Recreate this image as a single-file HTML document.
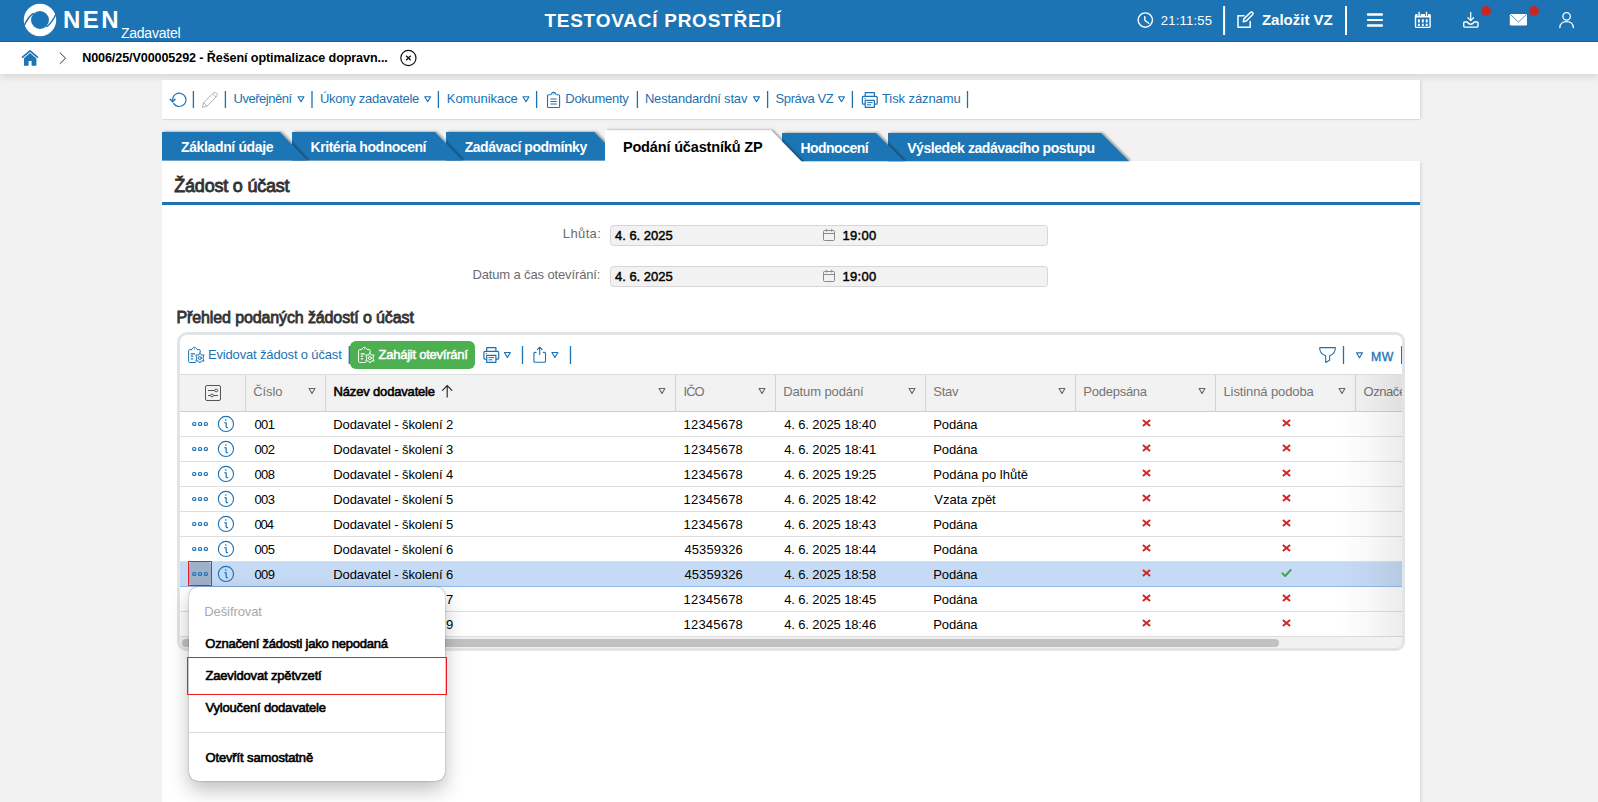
<!DOCTYPE html>
<html lang="cs"><head><meta charset="utf-8"><title>NEN - Podání účastníků ZP</title>
<style>
html,body{margin:0;padding:0}
body{width:1598px;height:802px;overflow:hidden;position:relative;background:#f2f2f2;font-family:"Liberation Sans", Arial, sans-serif;font-size:13px;color:#000}
.t{position:absolute;white-space:pre;line-height:20px;height:20px}
.a,.sep,.dot,.o{position:absolute;display:block}
#hdr{position:absolute;left:0;top:0;width:1598px;height:42px;box-sizing:border-box;border-bottom:1px solid #0c69ad;background:#1c74b4;z-index:2}
#crumbs{position:absolute;left:0;top:42px;width:1598px;height:32px;background:#fff;box-shadow:0 2px 8px rgba(0,0,0,.14)}
.dot{width:10px;height:10px;border-radius:50%;background:#c62828}
#toolbar{position:absolute;left:162px;top:80px;width:1258px;height:39px;background:#fff;box-shadow:2px 0 3px -1px rgba(0,0,0,.13),0 1px 1px rgba(0,0,0,.08)}
#panel{position:absolute;left:162px;top:160.5px;width:1258px;height:650px;background:#fff;box-shadow:2px 0 3px -1px rgba(0,0,0,.13);clip-path:inset(0 -8px 0 0)}
.inp{position:absolute;left:610px;width:438px;height:21px;box-sizing:border-box;border:1px solid #d6d6d6;border-radius:3.5px;background:#f2f2f2}
#grid{position:absolute;left:180px;top:335px;width:1222px;height:314px;background:#fff}
#gframe{position:absolute;left:177px;top:332px;width:1228px;height:319.4px;box-sizing:border-box;border:3px solid #e2e5e8;border-radius:9px;border-top-left-radius:10px}
#gbtn{position:absolute;left:350.3px;top:341.2px;width:125.2px;height:27.7px;border-radius:6px;background:#4caf50}
#ghead{position:absolute;left:180px;top:374px;width:1222px;height:38px;box-sizing:border-box;background:#f2f2f2;border-top:1px solid #dcdcdc;border-bottom:1px solid #cfcfcf}
.row{position:absolute;left:180px;width:1222px;height:25px;box-sizing:border-box;border-bottom:1px solid #dedede;background:#fff}
.row.sel{background:#c5daf5;border-bottom-color:#93baea;top:561.5px !important;height:25.5px}
.o{width:4.4px;height:4.2px;box-sizing:border-box;border:1.2px solid #1b72b3;border-radius:1.8px}
#fade{position:absolute;left:1338px;top:375px;width:64px;height:262px;background:linear-gradient(to right,rgba(0,0,0,0),rgba(0,0,0,.022) 45%,rgba(0,0,0,.075))}
#sbar{position:absolute;left:180px;top:637px;width:1222px;height:12px;background:#f1f1f1}
#sbar i{position:absolute;left:2px;top:2px;width:1097px;height:8px;border-radius:4px;background:#c1c1c1}
#menu{position:absolute;left:188.5px;top:587px;width:256.8px;height:194px;background:#fff;border-radius:9px;box-shadow:0 0 1.5px rgba(0,0,0,.5),0 9px 20px rgba(0,0,0,.25)}
</style></head>
<body>

<header id="hdr">
<svg class="a" style="left:22px;top:2px" width="36" height="36" viewBox="-18 -18 36 36">
 <circle r="12.6" fill="none" stroke="#fff" stroke-width="7.2"/>
 <path d="M-16.4 6.5C-14.15 2.05-10.46-5.24-6.2-6.7" fill="none" stroke="#1c74b4" stroke-width="1.5"/>
 <path d="M16.4-6.5C14.15-2.05 10.46 5.24 6.2 6.7" fill="none" stroke="#1c74b4" stroke-width="1.5"/>
</svg>
<span class="t" style="left:63.00px;top:9.80px;font-size:24px;font-weight:700;color:#fff;letter-spacing:2.500px;">NEN</span>
<span class="t" style="left:120.90px;top:23.30px;font-size:14px;color:#fff;letter-spacing:-0.225px;">Zadavatel</span>
<span class="t" style="left:544.40px;top:10.80px;font-size:19px;font-weight:700;color:#fff;letter-spacing:0.756px;">TESTOVACÍ PROSTŘEDÍ</span>
<svg class="a" style="left:1136px;top:10px" width="19" height="20" viewBox="1136 10 19 20" fill="none" stroke="#fff" stroke-width="1.4" stroke-linecap="round" stroke-linejoin="round"><circle cx="1145.3" cy="20.05" r="7.15"/><path d="M1144.8 16.6V20.2L1148.7 23.2"/></svg>
<span class="t" style="left:1160.80px;top:10.80px;font-size:13px;color:#fff;letter-spacing:0.214px;">21:11:55</span>
<i class="sep" style="left:1223px;top:6px;height:29px;width:3px;background:linear-gradient(90deg,rgba(255,255,255,0.90) 0px 1px,rgba(255,255,255,1.00) 1px 2px,rgba(255,255,255,0.10) 2px 3px)"></i>
<svg class="a" style="left:1235px;top:10px" width="21" height="20" viewBox="1235 10 21 20" fill="none" stroke="#fff" stroke-width="1.5" stroke-linejoin="round" stroke-linecap="round"><path d="M1244 15.8H1238V27.2H1250.2V21.5"/><path d="M1243.3 21.7L1243.9 18.9L1250.6 12.4Q1251.6 11.6 1252.6 12.5Q1253.6 13.5 1252.7 14.5L1246.1 21.1Z"/></svg>
<span class="t" style="left:1261.90px;top:9.80px;font-size:15px;font-weight:700;color:#fff;">Založit VZ</span>
<i class="sep" style="left:1345px;top:6px;height:29px;width:2px;background:linear-gradient(90deg,rgba(255,255,255,1.00) 0px 1px,rgba(255,255,255,1.00) 1px 2px)"></i>
<svg class="a" style="left:1366px;top:12px" width="18" height="17" viewBox="1366 12 18 17" fill="#fff"><rect x="1366.9" y="13.3" width="16.1" height="2.5" rx="1"/><rect x="1366.9" y="18.9" width="16.1" height="2.2" rx="1"/><rect x="1366.9" y="24.3" width="16.1" height="2.5" rx="1"/></svg>
<svg class="a" style="left:1413px;top:11px" width="20" height="19" viewBox="1413 11 20 19"><rect x="1415.5" y="14.9" width="14.6" height="12.5" rx="1" fill="none" stroke="#fff" stroke-width="1.4"/><rect x="1415" y="14.3" width="15.6" height="3.2" rx="0.8" fill="#fff"/><path d="M1419.1 12.1V16M1426.5 12.1V16" stroke="#1c74b4" stroke-width="3"/><path d="M1419.1 12.3V16.4M1426.5 12.3V16.4" stroke="#fff" stroke-width="1.4" stroke-linecap="round"/><path d="M1418.9 19.2V26.1M1422.8 19.2V26.1M1426.7 19.2V26.1" stroke="#fff" stroke-width="1.9" stroke-dasharray="3.2 1.3"/></svg>
<svg class="a" style="left:1461px;top:11px" width="20" height="19" viewBox="1461 11 20 19" fill="none" stroke="#fff" stroke-linecap="round" stroke-linejoin="round"><path d="M1470.7 12.4V20.4M1467.9 17.7L1470.7 20.6L1473.5 17.7" stroke-width="1.25"/><path d="M1467.2 22H1464.7Q1463.7 22 1463.7 23V26.1Q1463.7 27.1 1464.7 27.1H1477Q1478 27.1 1478 26.1V23Q1478 22 1477 22H1474.2Q1472.6 24.3 1470.7 24.3Q1468.8 24.3 1467.2 22Z" stroke-width="1.4"/></svg>
<i class="dot" style="left:1481px;top:6.2px"></i>
<svg class="a" style="left:1508px;top:13px" width="21" height="14" viewBox="1508 13 21 14"><rect x="1509.8" y="14" width="17.2" height="11.6" rx="1.3" fill="#fff"/><path d="M1510.4 14.6L1518.4 22L1526.4 14.6" fill="none" stroke="#1c74b4" stroke-width="0.75"/></svg>
<i class="dot" style="left:1529px;top:6.2px"></i>
<svg class="a" style="left:1557px;top:11px" width="20" height="19" viewBox="1557 11 20 19" fill="none" stroke="#fff" stroke-width="1.3" stroke-linecap="round"><circle cx="1566.6" cy="16.4" r="3.7"/><path d="M1559.8 27.6Q1560.2 21.6 1566.6 21.6Q1573 21.6 1573.4 27.6"/></svg>
</header>

<nav id="crumbs"></nav>
<svg class="a" style="left:21px;top:49px" width="18" height="18" viewBox="21 49 18 18"><path d="M22.6 57.2L30 50.9L37.4 57.2" fill="none" stroke="#1c74b4" stroke-width="1.7" stroke-linecap="round" stroke-linejoin="round"/><path d="M24 58.2L30 53.1L36.4 58.5V65.8H31.6V61H28.6V65.8H24Z" fill="#1c74b4"/></svg>
<svg class="a" style="left:58px;top:51px" width="10" height="14" viewBox="58 51 10 14"><path d="M59.8 52.6L65.6 58.2L59.8 63.8" fill="none" stroke="#333" stroke-width="1"/></svg>
<span class="t" style="left:82.20px;top:48.30px;font-size:12.6px;font-weight:700;letter-spacing:-0.106px;">N006/25/V00005292 - Řešení optimalizace dopravn...</span>
<svg class="a" style="left:399px;top:48px" width="19" height="20" viewBox="399 48 19 20" fill="none" stroke="#111" stroke-width="1.2"><circle cx="408.4" cy="58" r="7.6"/><path d="M406.1 55.7L410.7 60.3M410.7 55.7L406.1 60.3" stroke-width="1.3"/></svg>

<div id="toolbar"></div>
<svg class="a" style="left:169px;top:90px" width="20" height="20" viewBox="169 90 20 20" fill="none" stroke="#1b72b3" stroke-width="1.1" stroke-linecap="round" stroke-linejoin="round"><path d="M172.6 100.4A6.7 6.7 0 1 1 173.6 103.4"/><path d="M170.2 99.3L172.6 101.9L175 99.3" stroke-width="1.4"/></svg>
<i class="sep" style="left:192px;top:91px;height:17px;width:3px;background:linear-gradient(90deg,rgba(27,114,179,0.25) 0px 1px,rgba(27,114,179,1.00) 1px 2px,rgba(27,114,179,0.05) 2px 3px)"></i>
<svg class="a" style="left:200px;top:90px" width="20" height="20" viewBox="200 90 20 20" fill="none" stroke="#b9b1aa" stroke-width="1" stroke-linejoin="round"><path d="M202.4 107.4L203.6 102.6L213.6 92.8Q215 91.8 216.6 93.2Q218 94.8 216.9 96.2L207 106.2Z"/><path d="M203.6 102.6L207 106.2M212.6 93.8L216 97.2"/></svg>
<i class="sep" style="left:224px;top:91px;height:17px;width:3px;background:linear-gradient(90deg,rgba(27,114,179,0.25) 0px 1px,rgba(27,114,179,1.00) 1px 2px,rgba(27,114,179,0.05) 2px 3px)"></i>
<span class="t" style="left:233.50px;top:88.80px;font-size:13px;color:#1b72b3;letter-spacing:-0.467px;">Uveřejnění</span><svg class="a" style="left:296px;top:95px" width="10" height="8" viewBox="296 95 10 8" ><path d="M298.05 96.70H303.95L301.00 101.70Z" fill="none" stroke="#1b72b3" stroke-width="1.15" stroke-linejoin="round"/></svg>
<i class="sep" style="left:311px;top:91px;height:17px;width:2px;background:linear-gradient(90deg,rgba(27,114,179,0.65) 0px 1px,rgba(27,114,179,0.65) 1px 2px)"></i>
<span class="t" style="left:320.00px;top:88.80px;font-size:13px;color:#1b72b3;letter-spacing:-0.267px;">Úkony zadavatele</span><svg class="a" style="left:423px;top:95px" width="9" height="8" viewBox="423 95 9 8" ><path d="M424.75 96.70H430.65L427.70 101.70Z" fill="none" stroke="#1b72b3" stroke-width="1.15" stroke-linejoin="round"/></svg>
<i class="sep" style="left:437px;top:91px;height:17px;width:3px;background:linear-gradient(90deg,rgba(27,114,179,0.25) 0px 1px,rgba(27,114,179,1.00) 1px 2px,rgba(27,114,179,0.05) 2px 3px)"></i>
<span class="t" style="left:446.80px;top:88.80px;font-size:13px;color:#1b72b3;letter-spacing:-0.056px;">Komunikace</span><svg class="a" style="left:521px;top:95px" width="10" height="8" viewBox="521 95 10 8" ><path d="M523.05 96.70H528.95L526.00 101.70Z" fill="none" stroke="#1b72b3" stroke-width="1.15" stroke-linejoin="round"/></svg>
<i class="sep" style="left:535px;top:91px;height:17px;width:3px;background:linear-gradient(90deg,rgba(27,114,179,0.05) 0px 1px,rgba(27,114,179,1.00) 1px 2px,rgba(27,114,179,0.25) 2px 3px)"></i>
<svg class="a" style="left:545px;top:90px" width="17" height="20" viewBox="545 90 17 20" fill="none" stroke="#1b72b3" stroke-width="1.1" stroke-linejoin="round"><path d="M550.4 94.7H548.6Q547.5 94.7 547.5 95.8V106.4Q547.5 107.5 548.6 107.5H558.5Q559.6 107.5 559.6 106.4V95.8Q559.6 94.7 558.5 94.7H556.7"/><path d="M550.4 94.7Q551.5 94.4 551.7 93.4Q552.3 92.4 553.55 92.4Q554.8 92.4 555.4 93.4Q555.6 94.4 556.7 94.7"/><circle cx="553.55" cy="94" r="0.55" fill="#1b72b3" stroke="none"/><path d="M550.4 99H556.8M550.4 101.5H556.8M550.4 104H556.8" stroke-width="1.2"/></svg>
<span class="t" style="left:565.30px;top:88.80px;font-size:13px;color:#1b72b3;letter-spacing:-0.287px;">Dokumenty</span>
<i class="sep" style="left:636px;top:91px;height:17px;width:3px;background:linear-gradient(90deg,rgba(27,114,179,0.25) 0px 1px,rgba(27,114,179,1.00) 1px 2px,rgba(27,114,179,0.05) 2px 3px)"></i>
<span class="t" style="left:644.90px;top:88.80px;font-size:13px;color:#1b72b3;letter-spacing:-0.188px;">Nestandardní stav</span><svg class="a" style="left:752px;top:95px" width="9" height="8" viewBox="752 95 9 8" ><path d="M753.55 96.70H759.45L756.50 101.70Z" fill="none" stroke="#1b72b3" stroke-width="1.15" stroke-linejoin="round"/></svg>
<i class="sep" style="left:766px;top:91px;height:17px;width:3px;background:linear-gradient(90deg,rgba(27,114,179,0.05) 0px 1px,rgba(27,114,179,1.00) 1px 2px,rgba(27,114,179,0.25) 2px 3px)"></i>
<span class="t" style="left:775.60px;top:88.80px;font-size:13px;color:#1b72b3;letter-spacing:-0.413px;">Správa VZ</span><svg class="a" style="left:837px;top:95px" width="9" height="8" viewBox="837 95 9 8" ><path d="M838.55 96.70H844.45L841.50 101.70Z" fill="none" stroke="#1b72b3" stroke-width="1.15" stroke-linejoin="round"/></svg>
<i class="sep" style="left:851px;top:91px;height:17px;width:3px;background:linear-gradient(90deg,rgba(27,114,179,0.25) 0px 1px,rgba(27,114,179,1.00) 1px 2px,rgba(27,114,179,0.05) 2px 3px)"></i>
<svg class="a" style="left:860px;top:90px" width="20" height="20" viewBox="860 90 20 20" fill="none" stroke="#1b72b3" stroke-width="1.2" stroke-linejoin="round"><path d="M865.2 96.4V92.6H874.4V96.4"/><path d="M865.2 104.2H863.4Q862.4 104.2 862.4 103.2V97.4Q862.4 96.4 863.4 96.4H876.2Q877.2 96.4 877.2 97.4V103.2Q877.2 104.2 876.2 104.2H874.4"/><path d="M865.2 100.4H874.4V107.3H865.2Z"/><path d="M867 102.6H872.6M867 104.8H871" stroke-width="1"/><path d="M864.4 98.6H865.6" stroke-width="1"/></svg>
<span class="t" style="left:882.00px;top:88.80px;font-size:13px;color:#1b72b3;letter-spacing:-0.091px;">Tisk záznamu</span>
<i class="sep" style="left:966px;top:91px;height:17px;width:3px;background:linear-gradient(90deg,rgba(27,114,179,0.15) 0px 1px,rgba(27,114,179,1.00) 1px 2px,rgba(27,114,179,0.15) 2px 3px)"></i>

<section id="panel"></section>
<span class="t" style="left:174.30px;top:176.30px;font-size:18px;color:#333;letter-spacing:-0.215px;-webkit-text-stroke:0.85px #333;">Žádost o účast</span>
<i class="sep" style="left:162px;top:202px;width:1258px;height:3px;background:#1c74b4"></i>
<span class="t" style="left:562.80px;top:223.80px;font-size:13px;color:#6b6b6b;letter-spacing:0.380px;">Lhůta:</span>
<span class="t" style="left:472.40px;top:264.80px;font-size:13px;color:#6b6b6b;letter-spacing:-0.129px;">Datum a čas otevírání:</span>
<div class="inp" style="top:225px"></div>
<div class="inp" style="top:266px"></div>
<span class="t" style="left:614.90px;top:225.80px;font-size:13px;letter-spacing:0.011px;-webkit-text-stroke:0.45px #000;">4. 6. 2025</span><svg class="a" style="left:822px;top:228px" width="14" height="14" viewBox="0 0 14 14" fill="none" stroke="#8a8a8a" stroke-width="1"><rect x="1.5" y="2.5" width="11" height="10" rx="1"/><path d="M1.5 5.5H12.5M4.3 0.8V3.6M9.7 0.8V3.6"/></svg><span class="t" style="left:842.60px;top:225.80px;font-size:13px;letter-spacing:0.275px;-webkit-text-stroke:0.45px #000;">19:00</span>
<span class="t" style="left:614.90px;top:266.80px;font-size:13px;letter-spacing:0.011px;-webkit-text-stroke:0.45px #000;">4. 6. 2025</span><svg class="a" style="left:822px;top:269px" width="14" height="14" viewBox="0 0 14 14" fill="none" stroke="#8a8a8a" stroke-width="1"><rect x="1.5" y="2.5" width="11" height="10" rx="1"/><path d="M1.5 5.5H12.5M4.3 0.8V3.6M9.7 0.8V3.6"/></svg><span class="t" style="left:842.60px;top:266.80px;font-size:13px;letter-spacing:0.275px;-webkit-text-stroke:0.45px #000;">19:00</span>
<span class="t" style="left:176.50px;top:307.80px;font-size:16px;color:#333;letter-spacing:-0.119px;-webkit-text-stroke:0.8px #333;">Přehled podaných žádostí o účast</span>

<svg class="a" style="left:150px;top:120px" width="1000" height="45" viewBox="150 120 1000 45">
<defs><filter id="ts" x="-5%" y="-30%" width="110%" height="160%"><feDropShadow dx="2" dy="-0.4" stdDeviation="1.25" flood-color="#000" flood-opacity=".36"/></filter><filter id="ts2" x="-5%" y="-30%" width="110%" height="160%"><feDropShadow dx="1" dy="-0.5" stdDeviation="1.2" flood-color="#000" flood-opacity=".12"/></filter><clipPath id="cA"><rect x="150" y="120" width="1000" height="40.7"/></clipPath><clipPath id="cC"><rect x="150" y="120" width="1000" height="42"/></clipPath><clipPath id="cB"><rect x="150" y="120" width="1000" height="41.6"/></clipPath></defs>
<g clip-path="url(#cB)"><polygon points="888,133 1101,133 1129.5,161.6 888,161.6" fill="#1c74b4" filter="url(#ts)"/></g>
<g clip-path="url(#cB)"><polygon points="782,133 876,133 904.5,161.6 782,161.6" fill="#1c74b4" filter="url(#ts)"/></g>
<g clip-path="url(#cA)"><polygon points="446,132 594.3,132 622,160.7 446,160.7" fill="#1c74b4" filter="url(#ts)"/></g>
<g clip-path="url(#cA)"><polygon points="292,132 435,132 462.6,160.7 292,160.7" fill="#1c74b4" filter="url(#ts)"/></g>
<g clip-path="url(#cA)"><polygon points="162,132 280,132 307.4,160.7 162,160.7" fill="#1c74b4" filter="url(#ts)"/></g>
<g clip-path="url(#cC)"><polygon points="605,130.2 771,130.2 802.5,162.5 605,162.5" fill="#fff" filter="url(#ts)"/></g>
</svg>
<span class="t" style="left:181.00px;top:137.30px;font-size:14px;font-weight:700;color:#fff;letter-spacing:-0.362px;">Základní údaje</span>
<span class="t" style="left:310.60px;top:137.30px;font-size:14px;font-weight:700;color:#fff;letter-spacing:-0.459px;">Kritéria hodnocení</span>
<span class="t" style="left:464.70px;top:137.30px;font-size:14px;font-weight:700;color:#fff;letter-spacing:-0.463px;">Zadávací podmínky</span>
<span class="t" style="left:622.90px;top:137.30px;font-size:14.5px;font-weight:700;letter-spacing:-0.161px;">Podání účastníků ZP</span>
<span class="t" style="left:800.40px;top:138.30px;font-size:14px;font-weight:700;color:#fff;letter-spacing:-0.513px;">Hodnocení</span>
<span class="t" style="left:907.20px;top:138.30px;font-size:14px;font-weight:700;color:#fff;letter-spacing:-0.431px;">Výsledek zadávacího postupu</span>

<div id="grid"></div>
<svg class="a" style="left:187px;top:346px" width="18" height="18" viewBox="0 0 18 18" fill="none" stroke="#1b72b3" stroke-width="1" stroke-linejoin="round" stroke-linecap="round"><path d="M4.2 3.6H2.6Q1.6 3.6 1.6 4.6V15.5Q1.6 16.5 2.6 16.5H8.4"/><path d="M10.6 3.6H12.2Q13.2 3.6 13.2 4.6V6.4"/><path d="M4.2 3.6Q5.3 3.3 5.5 2.3Q6.1 1.3 7.4 1.3Q8.7 1.3 9.3 2.3Q9.5 3.3 10.6 3.6"/><circle cx="7.4" cy="2.9" r="0.55" fill="#1b72b3" stroke="none"/><path d="M4.2 7.9H7.4M4.2 10.2H5.8M4.2 12.8H5.8" stroke-width="1.2"/><path d="M12.9 7L14.4 9.1L17 8.9L15.9 12L17 15.1L14.4 14.9L12.9 17L11.4 14.9L8.8 15.1L9.9 12L8.8 8.9L11.4 9.1Z"/><circle cx="12.9" cy="12" r="1.5" stroke-width="1"/></svg>
<span class="t" style="left:207.90px;top:344.80px;font-size:13px;color:#1b72b3;letter-spacing:-0.155px;">Evidovat žádost o účast</span>
<i class="sep" style="left:348px;top:346px;height:18px;width:2px;background:linear-gradient(90deg,rgba(27,114,179,0.35) 0px 1px,rgba(27,114,179,0.95) 1px 2px)"></i>
<div id="gbtn"></div>
<svg class="a" style="left:357px;top:346px" width="18" height="18" viewBox="0 0 18 18" fill="none" stroke="#fff" stroke-width="1" stroke-linejoin="round" stroke-linecap="round"><path d="M4.2 3.6H2.6Q1.6 3.6 1.6 4.6V15.5Q1.6 16.5 2.6 16.5H8.4"/><path d="M10.6 3.6H12.2Q13.2 3.6 13.2 4.6V6.4"/><path d="M4.2 3.6Q5.3 3.3 5.5 2.3Q6.1 1.3 7.4 1.3Q8.7 1.3 9.3 2.3Q9.5 3.3 10.6 3.6"/><circle cx="7.4" cy="2.9" r="0.55" fill="#fff" stroke="none"/><path d="M4.2 7.9H7.4M4.2 10.2H5.8M4.2 12.8H5.8" stroke-width="1.2"/><path d="M12.9 7L14.4 9.1L17 8.9L15.9 12L17 15.1L14.4 14.9L12.9 17L11.4 14.9L8.8 15.1L9.9 12L8.8 8.9L11.4 9.1Z"/><circle cx="12.9" cy="12" r="1.5" stroke-width="1"/></svg>
<span class="t" style="left:378.50px;top:344.80px;font-size:13px;color:#fff;letter-spacing:-0.238px;-webkit-text-stroke:0.5px #fff;">Zahájit otevírání</span>
<svg class="a" style="left:482px;top:345px" width="20" height="20" viewBox="860.5 90 20 20" fill="none" stroke="#1b72b3" stroke-width="1.2" stroke-linejoin="round"><path d="M865.2 96.4V92.6H874.4V96.4"/><path d="M865.2 104.2H863.4Q862.4 104.2 862.4 103.2V97.4Q862.4 96.4 863.4 96.4H876.2Q877.2 96.4 877.2 97.4V103.2Q877.2 104.2 876.2 104.2H874.4"/><path d="M865.2 100.4H874.4V107.3H865.2Z"/><path d="M867 102.6H872.6M867 104.8H871" stroke-width="1"/><path d="M864.4 98.6H865.6" stroke-width="1"/></svg>
<svg class="a" style="left:503px;top:351px" width="9" height="8" viewBox="503 351 9 8" ><path d="M504.45 352.50H510.35L507.40 357.50Z" fill="none" stroke="#1b72b3" stroke-width="1.15" stroke-linejoin="round"/></svg>
<i class="sep" style="left:521px;top:346px;height:18px;width:3px;background:linear-gradient(90deg,rgba(27,114,179,0.15) 0px 1px,rgba(27,114,179,1.00) 1px 2px,rgba(27,114,179,0.15) 2px 3px)"></i>
<svg class="a" style="left:531px;top:344px" width="18" height="20" viewBox="531 344 18 20" fill="none" stroke="#1b72b3" stroke-width="1.1" stroke-linejoin="round" stroke-linecap="round"><path d="M536 352.4H534.9Q533.9 352.4 533.9 353.4V361.2Q533.9 362.2 534.9 362.2H544.5Q545.5 362.2 545.5 361.2V353.4Q545.5 352.4 544.5 352.4H543.4"/><path d="M539.7 347.3V354.6M537.3 349.7L539.7 347.2L542.1 349.7"/></svg>
<svg class="a" style="left:550px;top:351px" width="10" height="8" viewBox="550 351 10 8" ><path d="M551.95 352.50H557.85L554.90 357.50Z" fill="none" stroke="#1b72b3" stroke-width="1.15" stroke-linejoin="round"/></svg>
<i class="sep" style="left:569px;top:346px;height:18px;width:3px;background:linear-gradient(90deg,rgba(27,114,179,0.15) 0px 1px,rgba(27,114,179,1.00) 1px 2px,rgba(27,114,179,0.15) 2px 3px)"></i>
<svg class="a" style="left:1318px;top:345px" width="20" height="20" viewBox="1318 345 20 20" fill="none" stroke="#1b72b3" stroke-width="1.1" stroke-linejoin="round"><path d="M1319.7 347.6H1335.3Q1335.8 353.4 1329.6 355.7V360.2L1325.7 362.4V355.7Q1319.2 353.4 1319.7 347.6Z"/></svg>
<i class="sep" style="left:1342px;top:346px;height:18px;width:3px;background:linear-gradient(90deg,rgba(27,114,179,0.15) 0px 1px,rgba(27,114,179,1.00) 1px 2px,rgba(27,114,179,0.15) 2px 3px)"></i>
<svg class="a" style="left:1355px;top:351px" width="9" height="9" viewBox="1355 351 9 9" ><path d="M1356.55 352.80H1362.45L1359.50 357.80Z" fill="none" stroke="#1b72b3" stroke-width="1.15" stroke-linejoin="round"/></svg>
<span class="t" style="left:1371.00px;top:347.30px;font-size:12.3px;color:#1b72b3;letter-spacing:0.600px;-webkit-text-stroke:0.3px #1b72b3;">MW</span>
<i class="sep" style="left:1400.8px;top:346px;width:1.2px;height:18px;background:#1b72b3"></i>

<div id="ghead"></div>
<i class="sep" style="left:245px;top:375px;width:1px;height:36px;background:#d4d4d4"></i><i class="sep" style="left:325px;top:375px;width:1px;height:36px;background:#d4d4d4"></i><i class="sep" style="left:675px;top:375px;width:1px;height:36px;background:#d4d4d4"></i><i class="sep" style="left:775px;top:375px;width:1px;height:36px;background:#d4d4d4"></i><i class="sep" style="left:925px;top:375px;width:1px;height:36px;background:#d4d4d4"></i><i class="sep" style="left:1075px;top:375px;width:1px;height:36px;background:#d4d4d4"></i><i class="sep" style="left:1215px;top:375px;width:1px;height:36px;background:#d4d4d4"></i><i class="sep" style="left:1355px;top:375px;width:1px;height:36px;background:#d4d4d4"></i>
<svg class="a" style="left:204px;top:384px" width="18" height="18" viewBox="204 384 18 18" fill="none" stroke="#555" stroke-width="1"><rect x="205.5" y="385.5" width="15" height="15" rx="1.5"/><path d="M208 390.5H214.6M208 395.5H210.2M213.8 395.5H218"/><ellipse cx="216.2" cy="390.5" rx="1.6" ry="1.3"/><ellipse cx="212" cy="395.5" rx="1.6" ry="1.3"/></svg>
<span class="t" style="left:253.20px;top:381.80px;font-size:13px;color:#757575;letter-spacing:-0.100px;">Číslo</span><svg class="a" style="left:307px;top:387px" width="10" height="8" viewBox="307 387 10 8" ><path d="M309.05 388.50H314.95L312.00 393.50Z" fill="none" stroke="#666" stroke-width="1.15" stroke-linejoin="round"/></svg>
<span class="t" style="left:333.60px;top:381.80px;font-size:13px;letter-spacing:-0.173px;-webkit-text-stroke:0.55px #000;">Název dodavatele</span>
<svg class="a" style="left:440px;top:384px" width="14" height="15" viewBox="440 384 14 15" fill="none" stroke="#222" stroke-width="1.1"><path d="M447.2 397.4V385.8M442.2 390.6L447.2 385.6L452.2 390.6"/></svg>
<svg class="a" style="left:657px;top:387px" width="10" height="8" viewBox="657 387 10 8" ><path d="M659.05 388.50H664.95L662.00 393.50Z" fill="none" stroke="#666" stroke-width="1.15" stroke-linejoin="round"/></svg>
<span class="t" style="left:683.50px;top:381.80px;font-size:13px;color:#757575;letter-spacing:-0.950px;">IČO</span><svg class="a" style="left:757px;top:387px" width="10" height="8" viewBox="757 387 10 8" ><path d="M759.05 388.50H764.95L762.00 393.50Z" fill="none" stroke="#666" stroke-width="1.15" stroke-linejoin="round"/></svg>
<span class="t" style="left:783.20px;top:381.80px;font-size:13px;color:#757575;letter-spacing:-0.109px;">Datum podání</span><svg class="a" style="left:907px;top:387px" width="10" height="8" viewBox="907 387 10 8" ><path d="M909.05 388.50H914.95L912.00 393.50Z" fill="none" stroke="#666" stroke-width="1.15" stroke-linejoin="round"/></svg>
<span class="t" style="left:933.30px;top:381.80px;font-size:13px;color:#757575;letter-spacing:-0.233px;">Stav</span><svg class="a" style="left:1057px;top:387px" width="10" height="8" viewBox="1057 387 10 8" ><path d="M1059.05 388.50H1064.95L1062.00 393.50Z" fill="none" stroke="#666" stroke-width="1.15" stroke-linejoin="round"/></svg>
<span class="t" style="left:1083.30px;top:381.80px;font-size:13px;color:#757575;letter-spacing:-0.250px;">Podepsána</span><svg class="a" style="left:1197px;top:387px" width="10" height="8" viewBox="1197 387 10 8" ><path d="M1199.05 388.50H1204.95L1202.00 393.50Z" fill="none" stroke="#666" stroke-width="1.15" stroke-linejoin="round"/></svg>
<span class="t" style="left:1223.50px;top:381.80px;font-size:13px;color:#757575;letter-spacing:-0.107px;">Listinná podoba</span><svg class="a" style="left:1337px;top:387px" width="10" height="8" viewBox="1337 387 10 8" ><path d="M1339.05 388.50H1344.95L1342.00 393.50Z" fill="none" stroke="#666" stroke-width="1.15" stroke-linejoin="round"/></svg>
<div class="a" style="left:1356px;top:375px;width:46px;height:36px;overflow:hidden"><span class="t" style="left:7.50px;top:6.80px;font-size:13px;color:#757575;letter-spacing:-0.429px;">Označení</span></div>
<div class="row" style="top:412px"></div><svg class="a" style="left:191px;top:419px" width="18" height="9" viewBox="191 419 18 9" fill="none" stroke="#1b72b3" stroke-width="1.2"><rect x="192.70" y="422.50" width="3.1" height="2.9" rx="1.25"/><rect x="198.50" y="422.50" width="3.1" height="2.9" rx="1.25"/><rect x="204.30" y="422.50" width="3.1" height="2.9" rx="1.25"/></svg><svg class="a" style="left:216px;top:414px" width="20" height="20" viewBox="216 414 20 20" fill="none" stroke="#1b72b3" stroke-width="1.1" stroke-linecap="round"><circle cx="225.95" cy="423.95" r="7.6"/><path d="M224.65 422.75H226.15V426.55Q226.15 427.75 227.55 427.55" stroke-width="1.2"/><circle cx="225.75" cy="420.05" r="0.8" fill="#1b72b3" stroke="none"/></svg><span class="t" style="left:254.50px;top:414.80px;font-size:13px;letter-spacing:-0.650px;">001</span><span class="t" style="left:333.30px;top:414.80px;font-size:13px;letter-spacing:-0.110px;">Dodavatel - školení 2</span><span class="t" style="left:683.50px;top:414.80px;font-size:13px;letter-spacing:0.214px;">12345678</span><span class="t" style="left:784.20px;top:414.80px;font-size:13px;letter-spacing:-0.133px;">4. 6. 2025 18:40</span><span class="t" style="left:933.30px;top:414.80px;font-size:13px;letter-spacing:-0.120px;">Podána</span><svg class="a" style="left:1141px;top:418px" width="11" height="10" viewBox="1141 418 11 10" ><path d="M1142.90 419.95L1150.10 426.05M1150.10 419.95L1142.90 426.05" stroke="#d22626" stroke-width="1.95"/></svg><svg class="a" style="left:1281px;top:418px" width="11" height="10" viewBox="1281 418 11 10" ><path d="M1282.90 419.95L1290.10 426.05M1290.10 419.95L1282.90 426.05" stroke="#d22626" stroke-width="1.95"/></svg><div class="row" style="top:437px"></div><svg class="a" style="left:191px;top:444px" width="18" height="9" viewBox="191 444 18 9" fill="none" stroke="#1b72b3" stroke-width="1.2"><rect x="192.70" y="447.50" width="3.1" height="2.9" rx="1.25"/><rect x="198.50" y="447.50" width="3.1" height="2.9" rx="1.25"/><rect x="204.30" y="447.50" width="3.1" height="2.9" rx="1.25"/></svg><svg class="a" style="left:216px;top:439px" width="20" height="20" viewBox="216 439 20 20" fill="none" stroke="#1b72b3" stroke-width="1.1" stroke-linecap="round"><circle cx="225.95" cy="448.95" r="7.6"/><path d="M224.65 447.75H226.15V451.55Q226.15 452.75 227.55 452.55" stroke-width="1.2"/><circle cx="225.75" cy="445.05" r="0.8" fill="#1b72b3" stroke="none"/></svg><span class="t" style="left:254.50px;top:439.80px;font-size:13px;letter-spacing:-0.650px;">002</span><span class="t" style="left:333.30px;top:439.80px;font-size:13px;letter-spacing:-0.110px;">Dodavatel - školení 3</span><span class="t" style="left:683.50px;top:439.80px;font-size:13px;letter-spacing:0.214px;">12345678</span><span class="t" style="left:784.20px;top:439.80px;font-size:13px;letter-spacing:-0.133px;">4. 6. 2025 18:41</span><span class="t" style="left:933.30px;top:439.80px;font-size:13px;letter-spacing:-0.120px;">Podána</span><svg class="a" style="left:1141px;top:443px" width="11" height="10" viewBox="1141 443 11 10" ><path d="M1142.90 444.95L1150.10 451.05M1150.10 444.95L1142.90 451.05" stroke="#d22626" stroke-width="1.95"/></svg><svg class="a" style="left:1281px;top:443px" width="11" height="10" viewBox="1281 443 11 10" ><path d="M1282.90 444.95L1290.10 451.05M1290.10 444.95L1282.90 451.05" stroke="#d22626" stroke-width="1.95"/></svg><div class="row" style="top:462px"></div><svg class="a" style="left:191px;top:469px" width="18" height="9" viewBox="191 469 18 9" fill="none" stroke="#1b72b3" stroke-width="1.2"><rect x="192.70" y="472.50" width="3.1" height="2.9" rx="1.25"/><rect x="198.50" y="472.50" width="3.1" height="2.9" rx="1.25"/><rect x="204.30" y="472.50" width="3.1" height="2.9" rx="1.25"/></svg><svg class="a" style="left:216px;top:464px" width="20" height="20" viewBox="216 464 20 20" fill="none" stroke="#1b72b3" stroke-width="1.1" stroke-linecap="round"><circle cx="225.95" cy="473.95" r="7.6"/><path d="M224.65 472.75H226.15V476.55Q226.15 477.75 227.55 477.55" stroke-width="1.2"/><circle cx="225.75" cy="470.05" r="0.8" fill="#1b72b3" stroke="none"/></svg><span class="t" style="left:254.50px;top:464.80px;font-size:13px;letter-spacing:-0.650px;">008</span><span class="t" style="left:333.30px;top:464.80px;font-size:13px;letter-spacing:-0.110px;">Dodavatel - školení 4</span><span class="t" style="left:683.50px;top:464.80px;font-size:13px;letter-spacing:0.214px;">12345678</span><span class="t" style="left:784.20px;top:464.80px;font-size:13px;letter-spacing:-0.133px;">4. 6. 2025 19:25</span><span class="t" style="left:933.30px;top:464.80px;font-size:13px;">Podána po lhůtě</span><svg class="a" style="left:1141px;top:468px" width="11" height="10" viewBox="1141 468 11 10" ><path d="M1142.90 469.95L1150.10 476.05M1150.10 469.95L1142.90 476.05" stroke="#d22626" stroke-width="1.95"/></svg><svg class="a" style="left:1281px;top:468px" width="11" height="10" viewBox="1281 468 11 10" ><path d="M1282.90 469.95L1290.10 476.05M1290.10 469.95L1282.90 476.05" stroke="#d22626" stroke-width="1.95"/></svg><div class="row" style="top:487px"></div><svg class="a" style="left:191px;top:494px" width="18" height="9" viewBox="191 494 18 9" fill="none" stroke="#1b72b3" stroke-width="1.2"><rect x="192.70" y="497.50" width="3.1" height="2.9" rx="1.25"/><rect x="198.50" y="497.50" width="3.1" height="2.9" rx="1.25"/><rect x="204.30" y="497.50" width="3.1" height="2.9" rx="1.25"/></svg><svg class="a" style="left:216px;top:489px" width="20" height="20" viewBox="216 489 20 20" fill="none" stroke="#1b72b3" stroke-width="1.1" stroke-linecap="round"><circle cx="225.95" cy="498.95" r="7.6"/><path d="M224.65 497.75H226.15V501.55Q226.15 502.75 227.55 502.55" stroke-width="1.2"/><circle cx="225.75" cy="495.05" r="0.8" fill="#1b72b3" stroke="none"/></svg><span class="t" style="left:254.50px;top:489.80px;font-size:13px;letter-spacing:-0.650px;">003</span><span class="t" style="left:333.30px;top:489.80px;font-size:13px;letter-spacing:-0.110px;">Dodavatel - školení 5</span><span class="t" style="left:683.50px;top:489.80px;font-size:13px;letter-spacing:0.214px;">12345678</span><span class="t" style="left:784.20px;top:489.80px;font-size:13px;letter-spacing:-0.133px;">4. 6. 2025 18:42</span><span class="t" style="left:934.30px;top:489.80px;font-size:13px;">Vzata zpět</span><svg class="a" style="left:1141px;top:493px" width="11" height="10" viewBox="1141 493 11 10" ><path d="M1142.90 494.95L1150.10 501.05M1150.10 494.95L1142.90 501.05" stroke="#d22626" stroke-width="1.95"/></svg><svg class="a" style="left:1281px;top:493px" width="11" height="10" viewBox="1281 493 11 10" ><path d="M1282.90 494.95L1290.10 501.05M1290.10 494.95L1282.90 501.05" stroke="#d22626" stroke-width="1.95"/></svg><div class="row" style="top:512px"></div><svg class="a" style="left:191px;top:519px" width="18" height="9" viewBox="191 519 18 9" fill="none" stroke="#1b72b3" stroke-width="1.2"><rect x="192.70" y="522.50" width="3.1" height="2.9" rx="1.25"/><rect x="198.50" y="522.50" width="3.1" height="2.9" rx="1.25"/><rect x="204.30" y="522.50" width="3.1" height="2.9" rx="1.25"/></svg><svg class="a" style="left:216px;top:514px" width="20" height="20" viewBox="216 514 20 20" fill="none" stroke="#1b72b3" stroke-width="1.1" stroke-linecap="round"><circle cx="225.95" cy="523.95" r="7.6"/><path d="M224.65 522.75H226.15V526.55Q226.15 527.75 227.55 527.55" stroke-width="1.2"/><circle cx="225.75" cy="520.05" r="0.8" fill="#1b72b3" stroke="none"/></svg><span class="t" style="left:254.50px;top:514.80px;font-size:13px;letter-spacing:-1.150px;">004</span><span class="t" style="left:333.30px;top:514.80px;font-size:13px;letter-spacing:-0.110px;">Dodavatel - školení 5</span><span class="t" style="left:683.50px;top:514.80px;font-size:13px;letter-spacing:0.214px;">12345678</span><span class="t" style="left:784.20px;top:514.80px;font-size:13px;letter-spacing:-0.133px;">4. 6. 2025 18:43</span><span class="t" style="left:933.30px;top:514.80px;font-size:13px;letter-spacing:-0.120px;">Podána</span><svg class="a" style="left:1141px;top:518px" width="11" height="10" viewBox="1141 518 11 10" ><path d="M1142.90 519.95L1150.10 526.05M1150.10 519.95L1142.90 526.05" stroke="#d22626" stroke-width="1.95"/></svg><svg class="a" style="left:1281px;top:518px" width="11" height="10" viewBox="1281 518 11 10" ><path d="M1282.90 519.95L1290.10 526.05M1290.10 519.95L1282.90 526.05" stroke="#d22626" stroke-width="1.95"/></svg><div class="row" style="top:537px"></div><svg class="a" style="left:191px;top:544px" width="18" height="9" viewBox="191 544 18 9" fill="none" stroke="#1b72b3" stroke-width="1.2"><rect x="192.70" y="547.50" width="3.1" height="2.9" rx="1.25"/><rect x="198.50" y="547.50" width="3.1" height="2.9" rx="1.25"/><rect x="204.30" y="547.50" width="3.1" height="2.9" rx="1.25"/></svg><svg class="a" style="left:216px;top:539px" width="20" height="20" viewBox="216 539 20 20" fill="none" stroke="#1b72b3" stroke-width="1.1" stroke-linecap="round"><circle cx="225.95" cy="548.95" r="7.6"/><path d="M224.65 547.75H226.15V551.55Q226.15 552.75 227.55 552.55" stroke-width="1.2"/><circle cx="225.75" cy="545.05" r="0.8" fill="#1b72b3" stroke="none"/></svg><span class="t" style="left:254.50px;top:539.80px;font-size:13px;letter-spacing:-0.650px;">005</span><span class="t" style="left:333.30px;top:539.80px;font-size:13px;letter-spacing:-0.110px;">Dodavatel - školení 6</span><span class="t" style="left:684.50px;top:539.80px;font-size:13px;letter-spacing:0.071px;">45359326</span><span class="t" style="left:784.20px;top:539.80px;font-size:13px;letter-spacing:-0.133px;">4. 6. 2025 18:44</span><span class="t" style="left:933.30px;top:539.80px;font-size:13px;letter-spacing:-0.120px;">Podána</span><svg class="a" style="left:1141px;top:543px" width="11" height="10" viewBox="1141 543 11 10" ><path d="M1142.90 544.95L1150.10 551.05M1150.10 544.95L1142.90 551.05" stroke="#d22626" stroke-width="1.95"/></svg><svg class="a" style="left:1281px;top:543px" width="11" height="10" viewBox="1281 543 11 10" ><path d="M1282.90 544.95L1290.10 551.05M1290.10 544.95L1282.90 551.05" stroke="#d22626" stroke-width="1.95"/></svg><div class="row sel" style="top:562px"></div><i class="a" style="left:188px;top:561px;width:24px;height:25px;box-sizing:border-box;border:1.3px solid #ec1c24;background:#c9dcf5"></i><i class="a" style="left:189px;top:562px;width:22px;height:23px;border-radius:3px;background:#9fb1c9"></i><svg class="a" style="left:191px;top:569px" width="18" height="9" viewBox="191 569 18 9" fill="none" stroke="#1b72b3" stroke-width="1.2"><rect x="192.70" y="572.50" width="3.1" height="2.9" rx="1.25"/><rect x="198.50" y="572.50" width="3.1" height="2.9" rx="1.25"/><rect x="204.30" y="572.50" width="3.1" height="2.9" rx="1.25"/></svg><svg class="a" style="left:216px;top:564px" width="20" height="20" viewBox="216 564 20 20" fill="none" stroke="#1b72b3" stroke-width="1.1" stroke-linecap="round"><circle cx="225.95" cy="573.95" r="7.6"/><path d="M224.65 572.75H226.15V576.55Q226.15 577.75 227.55 577.55" stroke-width="1.2"/><circle cx="225.75" cy="570.05" r="0.8" fill="#1b72b3" stroke="none"/></svg><span class="t" style="left:254.50px;top:564.80px;font-size:13px;letter-spacing:-0.650px;">009</span><span class="t" style="left:333.30px;top:564.80px;font-size:13px;letter-spacing:-0.110px;">Dodavatel - školení 6</span><span class="t" style="left:684.50px;top:564.80px;font-size:13px;letter-spacing:0.071px;">45359326</span><span class="t" style="left:784.20px;top:564.80px;font-size:13px;letter-spacing:-0.133px;">4. 6. 2025 18:58</span><span class="t" style="left:933.30px;top:564.80px;font-size:13px;letter-spacing:-0.120px;">Podána</span><svg class="a" style="left:1141px;top:568px" width="11" height="10" viewBox="1141 568 11 10" ><path d="M1142.90 569.95L1150.10 576.05M1150.10 569.95L1142.90 576.05" stroke="#d22626" stroke-width="1.95"/></svg><svg class="a" style="left:1280px;top:568px" width="13" height="10" viewBox="1280 568 13 10" ><path d="M1282.30 573.20L1285.10 576.00L1290.70 570.00" fill="none" stroke="#3fa63f" stroke-width="1.9" stroke-linecap="round" stroke-linejoin="round"/></svg><div class="row" style="top:587px"></div><svg class="a" style="left:191px;top:594px" width="18" height="9" viewBox="191 594 18 9" fill="none" stroke="#1b72b3" stroke-width="1.2"><rect x="192.70" y="597.50" width="3.1" height="2.9" rx="1.25"/><rect x="198.50" y="597.50" width="3.1" height="2.9" rx="1.25"/><rect x="204.30" y="597.50" width="3.1" height="2.9" rx="1.25"/></svg><svg class="a" style="left:216px;top:589px" width="20" height="20" viewBox="216 589 20 20" fill="none" stroke="#1b72b3" stroke-width="1.1" stroke-linecap="round"><circle cx="225.95" cy="598.95" r="7.6"/><path d="M224.65 597.75H226.15V601.55Q226.15 602.75 227.55 602.55" stroke-width="1.2"/><circle cx="225.75" cy="595.05" r="0.8" fill="#1b72b3" stroke="none"/></svg><span class="t" style="left:254.50px;top:589.80px;font-size:13px;letter-spacing:-0.650px;">010</span><span class="t" style="left:333.30px;top:589.80px;font-size:13px;letter-spacing:-0.110px;">Dodavatel - školení 7</span><span class="t" style="left:683.50px;top:589.80px;font-size:13px;letter-spacing:0.214px;">12345678</span><span class="t" style="left:784.20px;top:589.80px;font-size:13px;letter-spacing:-0.133px;">4. 6. 2025 18:45</span><span class="t" style="left:933.30px;top:589.80px;font-size:13px;letter-spacing:-0.120px;">Podána</span><svg class="a" style="left:1141px;top:593px" width="11" height="10" viewBox="1141 593 11 10" ><path d="M1142.90 594.95L1150.10 601.05M1150.10 594.95L1142.90 601.05" stroke="#d22626" stroke-width="1.95"/></svg><svg class="a" style="left:1281px;top:593px" width="11" height="10" viewBox="1281 593 11 10" ><path d="M1282.90 594.95L1290.10 601.05M1290.10 594.95L1282.90 601.05" stroke="#d22626" stroke-width="1.95"/></svg><div class="row" style="top:612px"></div><svg class="a" style="left:191px;top:619px" width="18" height="9" viewBox="191 619 18 9" fill="none" stroke="#1b72b3" stroke-width="1.2"><rect x="192.70" y="622.50" width="3.1" height="2.9" rx="1.25"/><rect x="198.50" y="622.50" width="3.1" height="2.9" rx="1.25"/><rect x="204.30" y="622.50" width="3.1" height="2.9" rx="1.25"/></svg><svg class="a" style="left:216px;top:614px" width="20" height="20" viewBox="216 614 20 20" fill="none" stroke="#1b72b3" stroke-width="1.1" stroke-linecap="round"><circle cx="225.95" cy="623.95" r="7.6"/><path d="M224.65 622.75H226.15V626.55Q226.15 627.75 227.55 627.55" stroke-width="1.2"/><circle cx="225.75" cy="620.05" r="0.8" fill="#1b72b3" stroke="none"/></svg><span class="t" style="left:254.50px;top:614.80px;font-size:13px;letter-spacing:-0.150px;">011</span><span class="t" style="left:333.30px;top:614.80px;font-size:13px;letter-spacing:-0.110px;">Dodavatel - školení 9</span><span class="t" style="left:683.50px;top:614.80px;font-size:13px;letter-spacing:0.214px;">12345678</span><span class="t" style="left:784.20px;top:614.80px;font-size:13px;letter-spacing:-0.133px;">4. 6. 2025 18:46</span><span class="t" style="left:933.30px;top:614.80px;font-size:13px;letter-spacing:-0.120px;">Podána</span><svg class="a" style="left:1141px;top:618px" width="11" height="10" viewBox="1141 618 11 10" ><path d="M1142.90 619.95L1150.10 626.05M1150.10 619.95L1142.90 626.05" stroke="#d22626" stroke-width="1.95"/></svg><svg class="a" style="left:1281px;top:618px" width="11" height="10" viewBox="1281 618 11 10" ><path d="M1282.90 619.95L1290.10 626.05M1290.10 619.95L1282.90 626.05" stroke="#d22626" stroke-width="1.95"/></svg>
<div id="fade"></div>
<div id="sbar"><i></i></div>
<div id="gframe"></div>

<div id="menu"></div>
<span class="t" style="left:204.30px;top:601.80px;font-size:13px;color:#a9a9a9;letter-spacing:-0.100px;">Dešifrovat</span>
<span class="t" style="left:205.30px;top:633.80px;font-size:13px;letter-spacing:-0.228px;-webkit-text-stroke:0.6px #000;">Označení žádosti jako nepodaná</span>
<i class="a" style="left:186.6px;top:656.7px;width:260.6px;height:38.2px;box-sizing:border-box;border:1.4px solid #ec1c24"></i>
<span class="t" style="left:205.40px;top:665.80px;font-size:13px;letter-spacing:-0.153px;-webkit-text-stroke:0.6px #000;">Zaevidovat zpětvzetí</span>
<span class="t" style="left:205.40px;top:697.80px;font-size:13px;letter-spacing:-0.168px;-webkit-text-stroke:0.6px #000;">Vyloučení dodavatele</span>
<i class="sep" style="left:189px;top:732px;width:256px;height:1px;background:#dcdcdc"></i>
<span class="t" style="left:205.40px;top:747.80px;font-size:13px;letter-spacing:-0.118px;-webkit-text-stroke:0.6px #000;">Otevřít samostatně</span>

</body></html>
